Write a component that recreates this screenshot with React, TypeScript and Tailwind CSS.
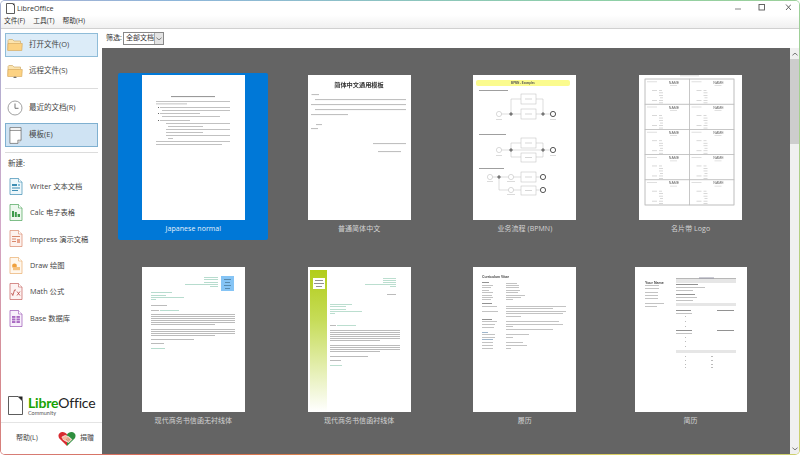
import React from "react";

type Seg = [number, number, number];

function Lines({ d, c = "#b4b4b4", h = 0.8 }: { d: Seg[]; c?: string; h?: number }) {
  return (
    <>
      {d.map(([a, b, y], i) => (
        <rect key={i} x={a} y={y} width={b - a} height={h} fill={c} />
      ))}
    </>
  );
}

const svgFont = "'Liberation Serif','Noto Sans CJK SC',serif";
const sansFont = "'Liberation Sans','Noto Sans CJK SC',sans-serif";

function Thumb1() {
  const d: Seg[] = [
    [14, 88, 26], [14, 45, 28.5], [18, 88, 32], [20, 88, 35], [18, 58, 38], [20, 78, 41], [18, 48, 45],
    [24, 88, 48], [26, 61, 51], [24, 88, 54], [24, 61, 57], [24, 88, 60], [26, 31, 63], [14, 88, 66], [14, 80, 69],
  ];
  return (
    <svg viewBox="0 0 103 145" className="w-full h-full">
      <Lines d={[[29, 73, 21]]} c="#9a9a9a" h={1.1} />
      <Lines d={d} c="#b2b2b2" />
      <rect x="16" y="32" width="1" height="1" fill="#666" />
      <rect x="16" y="38" width="1" height="1" fill="#666" />
      <rect x="16" y="45" width="1" height="1" fill="#666" />
    </svg>
  );
}

function Thumb2() {
  const d: Seg[] = [
    [3.5, 11, 19], [7, 98, 24], [3, 98, 29], [7, 98, 34], [3, 40, 39], [8, 14, 49], [3, 10, 53], [65, 98, 68], [70, 93, 76],
  ];
  return (
    <svg viewBox="0 0 103 145" className="w-full h-full">
      <text x="51" y="11.5" textAnchor="middle" fontSize="6.2" fontWeight="700" fill="#333" fontFamily={svgFont}>简体中文通用模板</text>
      <Lines d={d} c="#c0c0c0" h={1.1} />
    </svg>
  );
}

function Evt({ x, y, end }: { x: number; y: number; end?: boolean }) {
  return <circle cx={x} cy={y} r={2.6} fill="#fff" stroke={end ? "#444" : "#b5b5b5"} strokeWidth={end ? 0.9 : 0.5} />;
}
function Gw({ x, y }: { x: number; y: number }) {
  return <path d={`M${x - 2} ${y}L${x} ${y - 2}L${x + 2} ${y}L${x} ${y + 2}Z`} fill="#777" stroke="#aaa" strokeWidth="0.4" />;
}
function Task({ y, h = 10 }: { y: number; h?: number }) {
  return (
    <>
      <rect x="48" y={y} width="15" height={h} fill="#fff" stroke="#bbb" strokeWidth="0.5" />
      <rect x="52" y={y + h / 2 - 0.4} width="7" height="0.8" fill="#ccc" />
    </>
  );
}

function Thumb3() {
  return (
    <svg viewBox="0 0 103 145" className="w-full h-full">
      <rect x="3" y="5" width="94" height="6" rx="2" fill="#fbfb8e" />
      <text x="50" y="9" textAnchor="middle" fontSize="2.8" fontWeight="700" fill="#555" fontFamily={sansFont}>BPMN - Examples</text>
      <Lines d={[[6, 35, 15], [6, 33, 59], [6, 31, 93]]} c="#888" />
      <g stroke="#bbb" strokeWidth="0.5" fill="none">
        <path d="M26 39H80M38 39V24H48M63 24H70V39" />
        <path d="M26 75H80M38 75V68H48M38 75V82H48M63 68H70V75M63 82H70V75" />
        <path d="M17 102H70M26 102V115H70" />
      </g>
      <Evt x={26} y={39} /><Gw x={38} y={39} /><Task y={34} /><Task y={19} /><Gw x={70} y={39} /><Evt x={80} y={39} end />
      <Evt x={26} y={75} /><Gw x={38} y={75} /><Task y={63} /><Task y={78} h={9} /><Gw x={70} y={75} /><Evt x={80} y={75} end />
      <Evt x={17} y={102} /><Gw x={26} y={102} /><Evt x={38} y={102} /><Task y={97} /><Evt x={70} y={102} end />
      <Evt x={38} y={115} /><Task y={111} h={9} /><Evt x={70} y={115} end />
      <Lines d={[[23, 29, 44], [77, 83, 44], [23, 29, 80], [77, 83, 80], [14, 20, 106], [34, 42, 106], [34, 42, 119]]} c="#ccc" h={0.7} />
    </svg>
  );
}

function Thumb4() {
  const rows = [0, 1, 2, 3, 4];
  const cols = [0, 1];
  return (
    <svg viewBox="0 0 103 145" className="w-full h-full">
      <rect x="41" y="0.5" width="19" height="0.7" fill="#ccc" />
      <rect x="6" y="4" width="89" height="126" fill="#fff" stroke="#c4c4c4" strokeWidth="0.6" />
      {rows.map((r) =>
        cols.map((c) => {
          const x = 6 + c * 44.5;
          const y = 4 + r * 25.2;
          return (
            <g key={`${r}-${c}`}>
              <rect x={x} y={y} width="44.5" height="25.2" fill="none" stroke="#bdbdbd" strokeWidth="0.6" />
              <rect x={x + 2} y={y + 2.4} width="10" height="0.8" fill="#d8d8d8" />
              <text x={x + 29} y={y + 4.5} textAnchor="middle" fontSize="3.6" fill="#666" fontFamily={sansFont}>NAME</text>
              <rect x={x + 25} y={y + 6} width="7" height="0.6" fill="#ccc" />
              <Lines d={[[x + 7, x + 12, y + 11], [x + 14, x + 17, y + 11], [x + 14, x + 18, y + 13.5], [x + 14, x + 18, y + 16], [x + 15, x + 18, y + 18.5], [x + 7, x + 12, y + 21], [x + 14, x + 18, y + 21], [x + 14, x + 18, y + 23.5]]} c="#c8c8c8" h={0.7} />
            </g>
          );
        })
      )}
    </svg>
  );
}

function Para(x1: number, x2: number, start: number, n: number, step: number): Seg[] {
  return Array.from({ length: n }, (_, i): Seg => [x1, i === n - 1 ? x2 - 20 : x2, start + i * step]);
}

function Thumb5() {
  return (
    <svg viewBox="0 0 103 145" className="w-full h-full">
      <rect x="79" y="9" width="13" height="15" fill="#85c4f5" />
      <Lines d={[[82, 89, 12], [83, 88, 15], [82, 89, 18], [83, 88, 21]]} c="#4d7c9c" />
      <Lines d={[[62, 76, 10], [62, 76, 12], [62, 76, 15], [43, 76, 17], [68, 76, 19], [9, 30, 25], [9, 24, 28], [9, 42, 30], [9, 14, 32], [9, 23, 81], [18, 37, 43]]} c="#a6d4c2" />
      <Lines d={[[9, 25, 38], [9, 17, 43], ...Para(9, 93, 47, 6, 2), ...Para(9, 93, 62, 4, 2), [9, 52, 72], [9, 22, 76]]} c="#ababab" />
    </svg>
  );
}

function Thumb6() {
  return (
    <svg viewBox="0 0 103 145" className="w-full h-full">
      <defs>
        <linearGradient id="lime" x1="0" y1="0" x2="0" y2="1">
          <stop offset="0" stopColor="#b2cd1a" />
          <stop offset="0.35" stopColor="#c6dc58" />
          <stop offset="1" stopColor="#ffffff" />
        </linearGradient>
      </defs>
      <rect x="2" y="3" width="17" height="142" fill="url(#lime)" />
      <rect x="5" y="11" width="12" height="11" fill="#fff" />
      <Lines d={[[7, 15, 13], [6, 16, 16], [8, 14, 19]]} c="#777" />
      <Lines d={[[75, 88, 11], [75, 88, 13], [75, 88, 15], [57, 88, 17], [82, 88, 19], [22, 44, 37], [22, 38, 39], [22, 38, 42], [22, 54, 44], [22, 27, 46], [22, 34, 98], [29, 48, 58]]} c="#aad6c4" />
      <Lines d={[[79, 88, 27], [22, 28, 58], ...Para(22, 92, 63, 6, 2), ...Para(22, 92, 78, 4, 2), [22, 60, 89], [22, 33, 93]]} c="#ababab" />
    </svg>
  );
}

function Thumb7() {
  const l: Seg[] = [
    [9, 20, 18], [9, 18, 20], [9, 16, 23], [9, 20, 25], [9, 19, 28], [9, 20, 30], [9, 18, 32], [9, 24, 39], [9, 25, 44],
    [9, 24, 54], [9, 22, 57], [9, 21, 60], [9, 22, 67], [9, 22, 70], [9, 20, 75], [9, 20, 78], [9, 20, 81],
  ];
  const v: Seg[] = [
    [33, 44, 16], [33, 46, 18], [33, 46, 20], [33, 47, 23], [33, 45, 25], [33, 52, 28], [33, 48, 30], [33, 40, 32],
    [33, 93, 39], [33, 80, 41], [33, 93, 44], [33, 90, 46], [33, 48, 49], [33, 86, 54], [33, 90, 57], [33, 40, 59], [33, 80, 62],
    [33, 56, 67], [33, 40, 70], [33, 50, 75], [33, 54, 78], [33, 38, 81],
  ];
  return (
    <svg viewBox="0 0 103 145" className="w-full h-full">
      <text x="9" y="10.5" fontSize="3.4" fontWeight="700" fill="#444" fontFamily={sansFont}>Curriculum Vitae</text>
      <Lines d={[[9, 16, 15], [9, 19, 36], [9, 19, 52]]} c="#777" />
      <Lines d={[[9, 15, 65], [9, 20, 72]]} c="#88a4c0" />
      <Lines d={l} c="#b4b4b4" />
      <Lines d={v} c="#b4b4b4" />
    </svg>
  );
}

function Thumb8() {
  return (
    <svg viewBox="0 0 112 145" className="w-full h-full">
      <text x="10" y="16.5" fontSize="3.6" fontWeight="700" fill="#444" fontFamily={sansFont}>Your Name</text>
      <Lines d={[[10, 24, 18], [10, 24, 21], [10, 23, 25], [10, 23, 28], [10, 23, 31], [10, 29, 36], [10, 22, 39]]} c="#b4b4b4" />
      <rect x="41" y="12" width="60" height="4" fill="#e6e6e6" />
      <rect x="41" y="11" width="60" height="0.7" fill="#999" />
      <rect x="64" y="10.5" width="15" height="1" fill="#99a" />
      <rect x="41" y="36" width="60" height="3" fill="#e6e6e6" />
      <rect x="41" y="83" width="60" height="3" fill="#e6e6e6" />
      <Lines d={[[41, 63, 17], [41, 60, 27], [41, 56, 43], [82, 99, 43], [41, 57, 63], [82, 99, 63]]} c="#777" />
      <Lines d={[[41, 70, 20], [41, 58, 23], [41, 62, 30], [41, 58, 33], [41, 57, 46], [41, 57, 66]]} c="#b4b4b4" />
      <Lines d={[[50, 51, 49], [50, 51, 54], [50, 51, 59], [50, 51, 70], [50, 51, 74], [50, 51, 79], [50, 51, 89], [50, 51, 93], [50, 51, 97], [50, 51, 100], [76, 78, 89], [76, 78, 93], [76, 78, 97], [76, 78, 100]]} c="#aaa" />
    </svg>
  );
}

function Card({ label, selected, wide, children }: { label: string; selected?: boolean; wide?: boolean; children: React.ReactNode }) {
  return (
    <div className={`w-[150px] h-[167px] mx-auto flex flex-col items-center pt-[2px] rounded-[2px] ${selected ? "bg-[#0078d7]" : ""}`}>
      <div className={`${wide ? "w-[112px]" : "w-[103px]"} h-[145px] bg-white shrink-0`}>
        <div className="w-full h-full blur-[0.3px]">{children}</div>
      </div>
      <div className={`mt-[2px] text-[7px] leading-[14px] tracking-[0.05px] ${selected ? "text-[#e6f2fc]" : "text-[#d4d4d4]"}`}>{label}</div>
    </div>
  );
}

function Folder({ remote }: { remote?: boolean }) {
  return (
    <svg viewBox="0 0 16 14" className="w-[16px] h-[14px] shrink-0">
      <path d="M1 12V2.5L1.8 1.5H5.5L7 3H13.5V5" fill="#fbe3ae" stroke="#c9a25c" strokeWidth="0.6" />
      <path d="M.7 12.5L1 5.5H15.3L14.8 12.5Z" fill="#fcd283" stroke="#d3a558" strokeWidth="0.6" />
      {remote && <path d="M6.5 13.5H9.5M8 12.5V13.5" stroke="#555" strokeWidth="0.8" />}
    </svg>
  );
}

function Clock() {
  return (
    <svg viewBox="0 0 16 16" className="w-[16px] h-[16px] shrink-0">
      <circle cx="8" cy="8" r="7" fill="#fff" stroke="#8a8a8a" strokeWidth="0.8" />
      <path d="M8 3.5V8.3H11.5" fill="none" stroke="#555" strokeWidth="0.8" />
    </svg>
  );
}

function TemplateIcon() {
  return (
    <svg viewBox="0 0 14 18" className="w-[13px] h-[17px] shrink-0">
      <path d="M1 .5H13V14L9.5 17.5H1Z" fill="#fff" stroke="#555" strokeWidth="0.7" />
      <path d="M1 3.5H13" stroke="#555" strokeWidth="0.7" />
      <path d="M13 14H9.5V17.5" fill="#ddd" stroke="#555" strokeWidth="0.6" />
    </svg>
  );
}

function DocIcon({ stroke, fill, children }: { stroke: string; fill: string; children: React.ReactNode }) {
  return (
    <svg viewBox="0 0 14 17" className="w-[14px] h-[17px] shrink-0">
      <path d="M1 .5H9.5L13 4V16.5H1Z" fill={fill} stroke={stroke} strokeWidth="0.7" />
      <path d="M9.5 .5V4H13" fill="#fff" stroke={stroke} strokeWidth="0.6" />
      {children}
    </svg>
  );
}

function SideBtn({ icon, label, tone }: { icon: React.ReactNode; label: string; tone?: "light" | "strong" }) {
  const look = tone === "light" ? "bg-[#dcecf8] border-[#8fbcd8]" : tone === "strong" ? "bg-[#cfe3f3] border-[#7fb0d0]" : "border-transparent";
  return (
    <div className={`mx-[4px] h-[24px] flex items-center pl-[1px] border ${look}`}>
      <div className="w-[16px] flex justify-center">{icon}</div>
      <span className="ml-[6px] text-[7.5px] text-[#444]">{label}</span>
    </div>
  );
}

function NewItem({ icon, label }: { icon: React.ReactNode; label: string }) {
  return (
    <div className="h-[26.4px] flex items-center pl-[8px]">
      <div className="w-[14px]">{icon}</div>
      <span className="ml-[7px] text-[7.3px] text-[#444]">{label}</span>
    </div>
  );
}

function Heart() {
  return (
    <svg viewBox="0 0 20 18" className="w-[18px] h-[16px] shrink-0">
      <path d="M10 17L1.5 8.5C-1 5 1 1 5 1C7.2 1 9 2.3 10 4Z" fill="#d92b30" />
      <path d="M10 17L18.5 8.5C21 5 19 1 15 1C12.8 1 11 2.3 10 4Z" fill="#2f8f3f" />
      <path d="M4 7L8 5L12 6.5L15.5 9.5L12 13L7 10.5L5 9" fill="#f6b9a0" stroke="#fff" strokeWidth="0.8" />
      <path d="M9 9L12 11.5M10.5 8L13.5 10.5" stroke="#8a4a30" strokeWidth="0.5" />
    </svg>
  );
}

export default function App() {
  return (
    <div className="w-[800px] h-[455px] overflow-hidden rounded-[5px] p-px bg-[conic-gradient(#8cc4c0_0deg,#8fd0a6_45deg,#d9cf63_135deg,#d9a050_180deg,#d9684f_225deg,#d3a8c8_270deg,#8eb6da_315deg,#8cc4c0_360deg)] font-['Open_Sans','Noto_Sans_CJK_SC',sans-serif]">
      <div className="w-full h-full flex flex-col bg-white rounded-[4px] overflow-hidden">
        <div className="h-[14px] shrink-0 flex items-center pl-[5px] pr-[8px] bg-white">
          <svg viewBox="0 0 9 11" className="w-[9px] h-[11px]">
            <path d="M.5 .5H6.5L8.5 2.5V10.5H.5Z" fill="#fff" stroke="#333" strokeWidth="0.8" />
            <path d="M6 .5L8.5 3V.5Z" fill="#333" />
          </svg>
          <span className="ml-[2px] text-[7.2px] text-[#333]">LibreOffice</span>
          <svg viewBox="0 0 56 10" className="ml-auto w-[56px] h-[10px]">
            <path d="M0 6H6" stroke="#777" strokeWidth="0.9" />
            <rect x="24" y="1.5" width="5.5" height="5.5" fill="none" stroke="#555" strokeWidth="0.9" />
            <path d="M51 1.5L56 7M56 1.5L51 7" stroke="#555" strokeWidth="0.9" />
          </svg>
        </div>
        <div className="h-[14px] shrink-0 flex items-center gap-[8px] pl-[3px] bg-gradient-to-b from-white to-[#f0f0f0] border-b border-[#d0d0d0] text-[6.8px] text-[#333]">
          <span>文件(F)</span>
          <span>工具(T)</span>
          <span>帮助(H)</span>
        </div>
        <div className="flex-1 min-h-0 flex">
          <aside className="w-[101px] shrink-0 flex flex-col pt-[4px] bg-white">
            <SideBtn tone="light" icon={<Folder />} label="打开文件(O)" />
            <div className="mt-[2px]"><SideBtn icon={<Folder remote />} label="远程文件(S)" /></div>
            <div className="mx-[4px] mt-[5px] mb-[7px] h-px bg-[#dcdcdc]" />
            <SideBtn icon={<Clock />} label="最近的文档(R)" />
            <div className="mt-[3px]"><SideBtn tone="strong" icon={<TemplateIcon />} label="模板(E)" /></div>
            <div className="mx-[4px] mt-[5px] h-px bg-[#dcdcdc]" />
            <div className="mt-[5px] pl-[7px] text-[7.5px] leading-[11px] text-[#444]">新建:</div>
            <div className="mt-[4px]">
              <NewItem label="Writer 文本文档" icon={
                <DocIcon stroke="#3e8db3" fill="#eef7fb">
                  <rect x="3" y="6" width="5" height="2" fill="#3e8db3" /><rect x="3" y="9.5" width="8" height="1" fill="#3e8db3" /><rect x="3" y="12" width="6" height="1" fill="#3e8db3" /><rect x="9" y="6" width="2" height="2" fill="#85c0da" />
                </DocIcon>} />
              <NewItem label="Calc 电子表格" icon={
                <DocIcon stroke="#4aa357" fill="#eef8ef">
                  <rect x="3" y="7" width="2" height="6" fill="#3d9a4b" /><rect x="5.8" y="8" width="2" height="5" fill="#3d9a4b" /><rect x="8.6" y="10" width="2.4" height="3" fill="#3d9a4b" />
                </DocIcon>} />
              <NewItem label="Impress 演示文稿" icon={
                <DocIcon stroke="#d9886c" fill="#fdf2ee">
                  <rect x="3" y="6" width="8" height="1" fill="#d9886c" /><rect x="3" y="8.5" width="4" height="1" fill="#d9886c" /><rect x="3" y="11" width="4" height="1" fill="#d9886c" /><rect x="8" y="9" width="3" height="4" fill="#e8a58e" />
                </DocIcon>} />
              <NewItem label="Draw 绘图" icon={
                <DocIcon stroke="#e9ae6d" fill="#fff7ed">
                  <circle cx="5.5" cy="9" r="2.4" fill="#f0a03c" /><rect x="4" y="10" width="7" height="3.2" fill="#f6c27f" />
                </DocIcon>} />
              <NewItem label="Math 公式" icon={
                <DocIcon stroke="#c4605c" fill="#fdf3f2">
                  <path d="M2.5 10L3.8 12.5L5.5 7H7M8 8.5L11 12.5M11 8.5L8 12.5" fill="none" stroke="#b9423e" strokeWidth="0.8" />
                </DocIcon>} />
              <NewItem label="Base 数据库" icon={
                <DocIcon stroke="#9a55b5" fill="#f8f0fb">
                  <rect x="3" y="6" width="3.4" height="7" fill="#a96ac2" /><rect x="7.5" y="6" width="3.4" height="7" fill="#a96ac2" /><path d="M3 8.3H11M3 10.6H11" stroke="#f8f0fb" strokeWidth="0.6" />
                </DocIcon>} />
            </div>
            <div className="mt-auto flex items-start pl-[7px]">
              <svg viewBox="0 0 15 19" className="w-[15px] h-[19px] shrink-0">
                <path d="M.5 .5H10L14.5 5V18.5H.5Z" fill="#fff" stroke="#333" strokeWidth="0.8" />
                <path d="M10 .5L14.5 5V.5Z" fill="#222" />
              </svg>
              <div className="ml-[5px] -mt-[1px] flex flex-col font-['Lato',sans-serif]">
                <div className="text-[14px] leading-[15px] tracking-[-0.2px] text-[#222]"><span className="font-bold text-[#18a303]">Libre</span>Office</div>
                <div className="text-[5.5px] leading-[6px] text-[#555]">Community</div>
              </div>
            </div>
            <div className="mt-[6px] h-px bg-[#e4e4e4]" />
            <div className="h-[31px] shrink-0 flex items-center pl-[15px] text-[7px] text-[#444]">
              <span className="w-[42px]">帮助(L)</span>
              <Heart />
              <span className="ml-[4px]">捐赠</span>
            </div>
          </aside>
          <main className="flex-1 min-w-0 flex flex-col">
            <div className="h-[19px] shrink-0 flex items-center pl-[4px] bg-white text-[7px] text-[#333]">
              <span className="w-[17px] whitespace-nowrap">筛选:</span>
              <div className="w-[41px] h-[13px] flex items-center pl-[2px] border border-[#888] bg-white">
                <span className="flex-1 whitespace-nowrap">全部文档</span>
                <div className="w-[9px] h-full flex items-center justify-center bg-[#e4e4e4] border-l border-[#aaa]">
                  <svg viewBox="0 0 7 4" className="w-[6px] h-[4px]"><path d="M.5 .5L3.5 3L6.5 .5" fill="none" stroke="#555" strokeWidth="0.8" /></svg>
                </div>
              </div>
            </div>
            <div className="flex-1 min-h-0 flex">
              <div className="flex-1 min-w-0 overflow-hidden bg-[#646464] pt-[25px] pl-[8.5px]">
                <div className="grid grid-cols-[repeat(4,165.75px)] gap-y-[25px]">
                  <Card label="Japanese normal" selected><Thumb1 /></Card>
                  <Card label="普通简体中文"><Thumb2 /></Card>
                  <Card label="业务流程 (BPMN)"><Thumb3 /></Card>
                  <Card label="名片带 Logo"><Thumb4 /></Card>
                  <Card label="现代商务书信函无衬线体"><Thumb5 /></Card>
                  <Card label="现代商务书信函衬线体"><Thumb6 /></Card>
                  <Card label="履历"><Thumb7 /></Card>
                  <Card label="简历" wide><Thumb8 /></Card>
                </div>
              </div>
              <div className="w-[9px] shrink-0 flex flex-col bg-[#f0f0f0]">
                <div className="h-[11px] flex items-center justify-center">
                  <svg viewBox="0 0 7 4" className="w-[6px] h-[4px]"><path d="M.5 3.5L3.5 1L6.5 3.5" fill="none" stroke="#555" strokeWidth="0.9" /></svg>
                </div>
                <div className="h-[85px] bg-[#cdcdcd]" />
                <div className="mt-auto h-[10px] flex items-center justify-center">
                  <svg viewBox="0 0 7 4" className="w-[6px] h-[4px]"><path d="M.5 .5L3.5 3L6.5 .5" fill="none" stroke="#555" strokeWidth="0.9" /></svg>
                </div>
              </div>
            </div>
          </main>
        </div>
      </div>
    </div>
  );
}
